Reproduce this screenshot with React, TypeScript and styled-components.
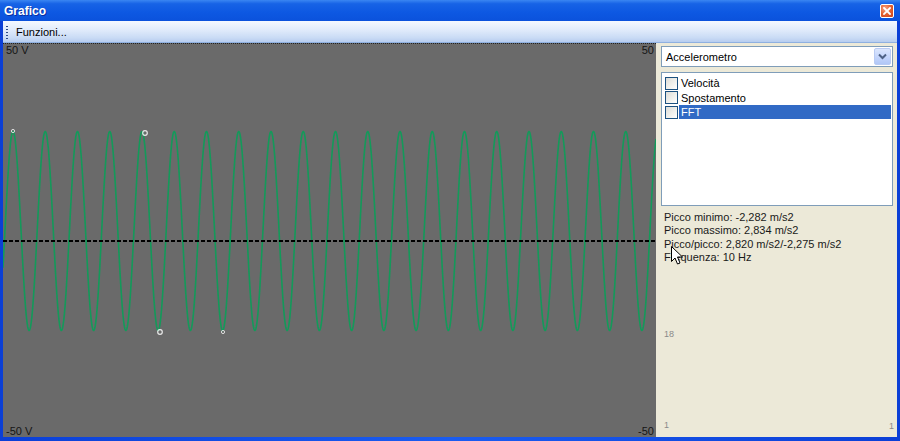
import React from "react";
import styled, { createGlobalStyle } from "styled-components";

const Global = createGlobalStyle`
  html, body { margin: 0; padding: 0; background: #0a4fd8; }
  body { font-family: Tahoma, "DejaVu Sans", "Liberation Sans", sans-serif; }
  * { box-sizing: border-box; }
`;

const Window = styled.div`
  width: 900px;
  height: 441px;
  display: flex;
  flex-direction: column;
  background: linear-gradient(90deg, #0b3fd6 0, #1a5cf0 50%, #0b3fd6 100%);
  padding: 0 3px 4px 3px;
  position: relative;
  overflow: hidden;
`;

const TitleBar = styled.div`
  height: 21px;
  margin: 0 -3px;
  padding: 0 6px 0 4px;
  display: flex;
  align-items: center;
  justify-content: space-between;
  background: linear-gradient(180deg, #3a86f2 0%, #1763e6 18%, #0d58e2 60%, #0b52dc 100%);
`;

const Title = styled.span`
  color: #fff;
  font-family: "Liberation Sans", Arial, sans-serif;
  font-weight: bold;
  font-size: 12px;
  text-shadow: 1px 1px 0 #0a2fa0;
`;

const CloseBtn = styled.div`
  width: 14px;
  height: 14px;
  margin-top: 1px;
  border: 1px solid #fff;
  border-radius: 2px;
  background: radial-gradient(circle at 35% 30%, #f5a584 0%, #e5602f 50%, #c8401a 100%);
  display: flex;
  align-items: center;
  justify-content: center;
`;

const Toolbar = styled.div`
  height: 22px;
  display: flex;
  align-items: center;
  gap: 8px;
  padding-left: 3px;
  background: linear-gradient(180deg, #f5f9ff 0%, #e2ecfb 40%, #c9dbf5 80%, #b7cdef 100%);
  border-bottom: 1px solid #8fb0e0;
`;

const Grip = styled.div`
  width: 2px;
  height: 14px;
  background-image: radial-gradient(circle, #2c4a88 50%, transparent 55%);
  background-size: 2px 3px;
`;

const MenuText = styled.span`
  font-family: "Liberation Sans", Arial, sans-serif;
  font-size: 11px;
  color: #000;
`;

const Body = styled.div`
  flex: 1;
  display: flex;
  min-height: 0;
`;

const Chart = styled.div`
  position: relative;
  width: 653px;
  background: #6a6a6a;
  border-top: 1px dotted #222;
`;

const AxisLabel = styled.span<{ $top?: boolean; $right?: boolean }>`
  position: absolute;
  font-family: "Liberation Sans", Arial, sans-serif;
  font-size: 11px;
  color: #151515;
  ${(p) => (p.$top ? "top: 0px;" : "bottom: 0px;")}
  ${(p) => (p.$right ? "right: 2px;" : "left: 3px;")}
`;

const Panel = styled.div`
  flex: 1;
  position: relative;
  background: #ece9d8;
  padding: 3px 4px 0 5px;
  display: flex;
  flex-direction: column;
`;

const Select = styled.div`
  height: 21px;
  border: 1px solid #7f9db9;
  background: #fff;
  display: flex;
  align-items: center;
  padding: 1px;
`;

const SelectText = styled.span`
  flex: 1;
  padding-left: 3px;
  font-family: "Liberation Sans", Arial, sans-serif;
  font-size: 11px;
  color: #000;
`;

const DropBtn = styled.div`
  width: 17px;
  height: 17px;
  border: 1px solid #b9cbf3;
  border-radius: 2px;
  background: linear-gradient(180deg, #dbe6fd 0%, #c1d3fb 60%, #b1c7f6 100%);
  display: flex;
  align-items: center;
  justify-content: center;
`;

const ListBox = styled.div`
  margin-top: 5px;
  height: 134px;
  border: 1px solid #7f9db9;
  background: #fff;
  padding: 3px 1px 0 3px;
  display: flex;
  flex-direction: column;
`;

const Row = styled.div`
  height: 14.5px;
  display: flex;
  align-items: center;
  gap: 1px;
`;

const Box = styled.div`
  width: 13px;
  height: 13px;
  border: 1px solid #1c5180;
  background: linear-gradient(135deg, #dcdcd7 0%, #f2f2ee 60%, #fff 100%);
  flex-shrink: 0;
`;

const ItemLabel = styled.span<{ $selected?: boolean }>`
  flex: 1;
  height: 14px;
  line-height: 14px;
  padding-left: 2px;
  font-family: "Liberation Sans", Arial, sans-serif;
  font-size: 11px;
  color: ${(p) => (p.$selected ? "#fff" : "#000")};
  background: ${(p) => (p.$selected ? "#316ac5" : "transparent")};
`;

const Stats = styled.div`
  margin-top: 5px;
  padding-left: 3px;
  display: flex;
  flex-direction: column;
`;

const StatLine = styled.span`
  font-family: "Liberation Sans", Arial, sans-serif;
  font-size: 11px;
  line-height: 13.3px;
  color: #1a1a1a;
`;

const Tiny = styled.span<{ $top: number; $left?: number; $right?: number }>`
  position: absolute;
  top: ${(p) => p.$top}px;
  ${(p) => (p.$left !== undefined ? `left: ${p.$left}px;` : `right: ${p.$right}px;`)}
  font-family: "Liberation Sans", Arial, sans-serif;
  font-size: 9px;
  color: #8a8a8a;
`;

const Cursor = styled.svg`
  position: absolute;
  left: 15px;
  top: 203px;
`;

const CHART_W = 653;
const CHART_H = 393;

function wavePath() {
  const pts: string[] = [];
  const period = 32.25;
  const x0 = 10;
  const mid = 187;
  const amp = 99.5;
  for (let x = 0; x <= CHART_W; x += 0.25) {
    const y = mid - amp * Math.cos((2 * Math.PI * (x - x0)) / period);
    pts.push(`${x === 0 ? "M" : "L"}${x.toFixed(2)},${y.toFixed(2)}`);
  }
  return pts.join(" ");
}

const Wave = () => (
  <svg width={CHART_W} height={CHART_H - 1} style={{ display: "block" }}>
    <path d={wavePath()} fill="none" stroke="#139a5a" strokeWidth={1.6} strokeLinejoin="round" />
    <line x1={0} y1={197} x2={CHART_W} y2={197} stroke="#000" strokeWidth={2} strokeDasharray="4 2" />
    <circle cx={10} cy={87} r={1.6} fill="none" stroke="#ddd" strokeWidth={1} />
    <circle cx={142} cy={89} r={2.3} fill="none" stroke="#e8e8e8" strokeWidth={1.2} />
    <circle cx={157} cy={288} r={2.3} fill="none" stroke="#e8e8e8" strokeWidth={1.2} />
    <circle cx={220} cy={288} r={1.6} fill="none" stroke="#ddd" strokeWidth={1} />
  </svg>
);

export default function App() {
  return (
    <>
      <Global />
      <Window>
        <TitleBar>
          <Title>Grafico</Title>
          <CloseBtn>
            <svg width="8" height="8" viewBox="0 0 8 8">
              <path d="M1 1 L7 7 M7 1 L1 7" stroke="#fff" strokeWidth="1.8" strokeLinecap="square" />
            </svg>
          </CloseBtn>
        </TitleBar>
        <Toolbar>
          <Grip />
          <MenuText>Funzioni...</MenuText>
        </Toolbar>
        <Body>
          <Chart>
            <Wave />
            <AxisLabel $top>50 V</AxisLabel>
            <AxisLabel $top $right>50</AxisLabel>
            <AxisLabel>-50 V</AxisLabel>
            <AxisLabel $right>-50</AxisLabel>
          </Chart>
          <Panel>
            <Select>
              <SelectText>Accelerometro</SelectText>
              <DropBtn>
                <svg width="9" height="7" viewBox="0 0 9 7">
                  <path d="M1 1.5 L4.5 5 L8 1.5" fill="none" stroke="#4d6185" strokeWidth="2" />
                </svg>
              </DropBtn>
            </Select>
            <ListBox>
              <Row>
                <Box />
                <ItemLabel>Velocità</ItemLabel>
              </Row>
              <Row>
                <Box />
                <ItemLabel>Spostamento</ItemLabel>
              </Row>
              <Row>
                <Box />
                <ItemLabel $selected>FFT</ItemLabel>
              </Row>
            </ListBox>
            <Stats>
              <StatLine>Picco minimo: -2,282 m/s2</StatLine>
              <StatLine>Picco massimo: 2,834 m/s2</StatLine>
              <StatLine>Picco/picco: 2,820 m/s2/-2,275 m/s2</StatLine>
              <StatLine>Frequenza: 10 Hz</StatLine>
            </Stats>
            <Tiny $top={286} $left={8}>18</Tiny>
            <Tiny $top={377} $left={8}>1</Tiny>
            <Tiny $top={378} $right={3}>1</Tiny>
            <Cursor width="12" height="19" viewBox="0 0 12 19">
              <path d="M0.5 0.5 L0.5 15.5 L4 12 L6.5 18 L9 17 L6.5 11 L11.5 11 Z" fill="#fff" stroke="#000" strokeWidth="1" />
            </Cursor>
          </Panel>
        </Body>
      </Window>
    </>
  );
}
